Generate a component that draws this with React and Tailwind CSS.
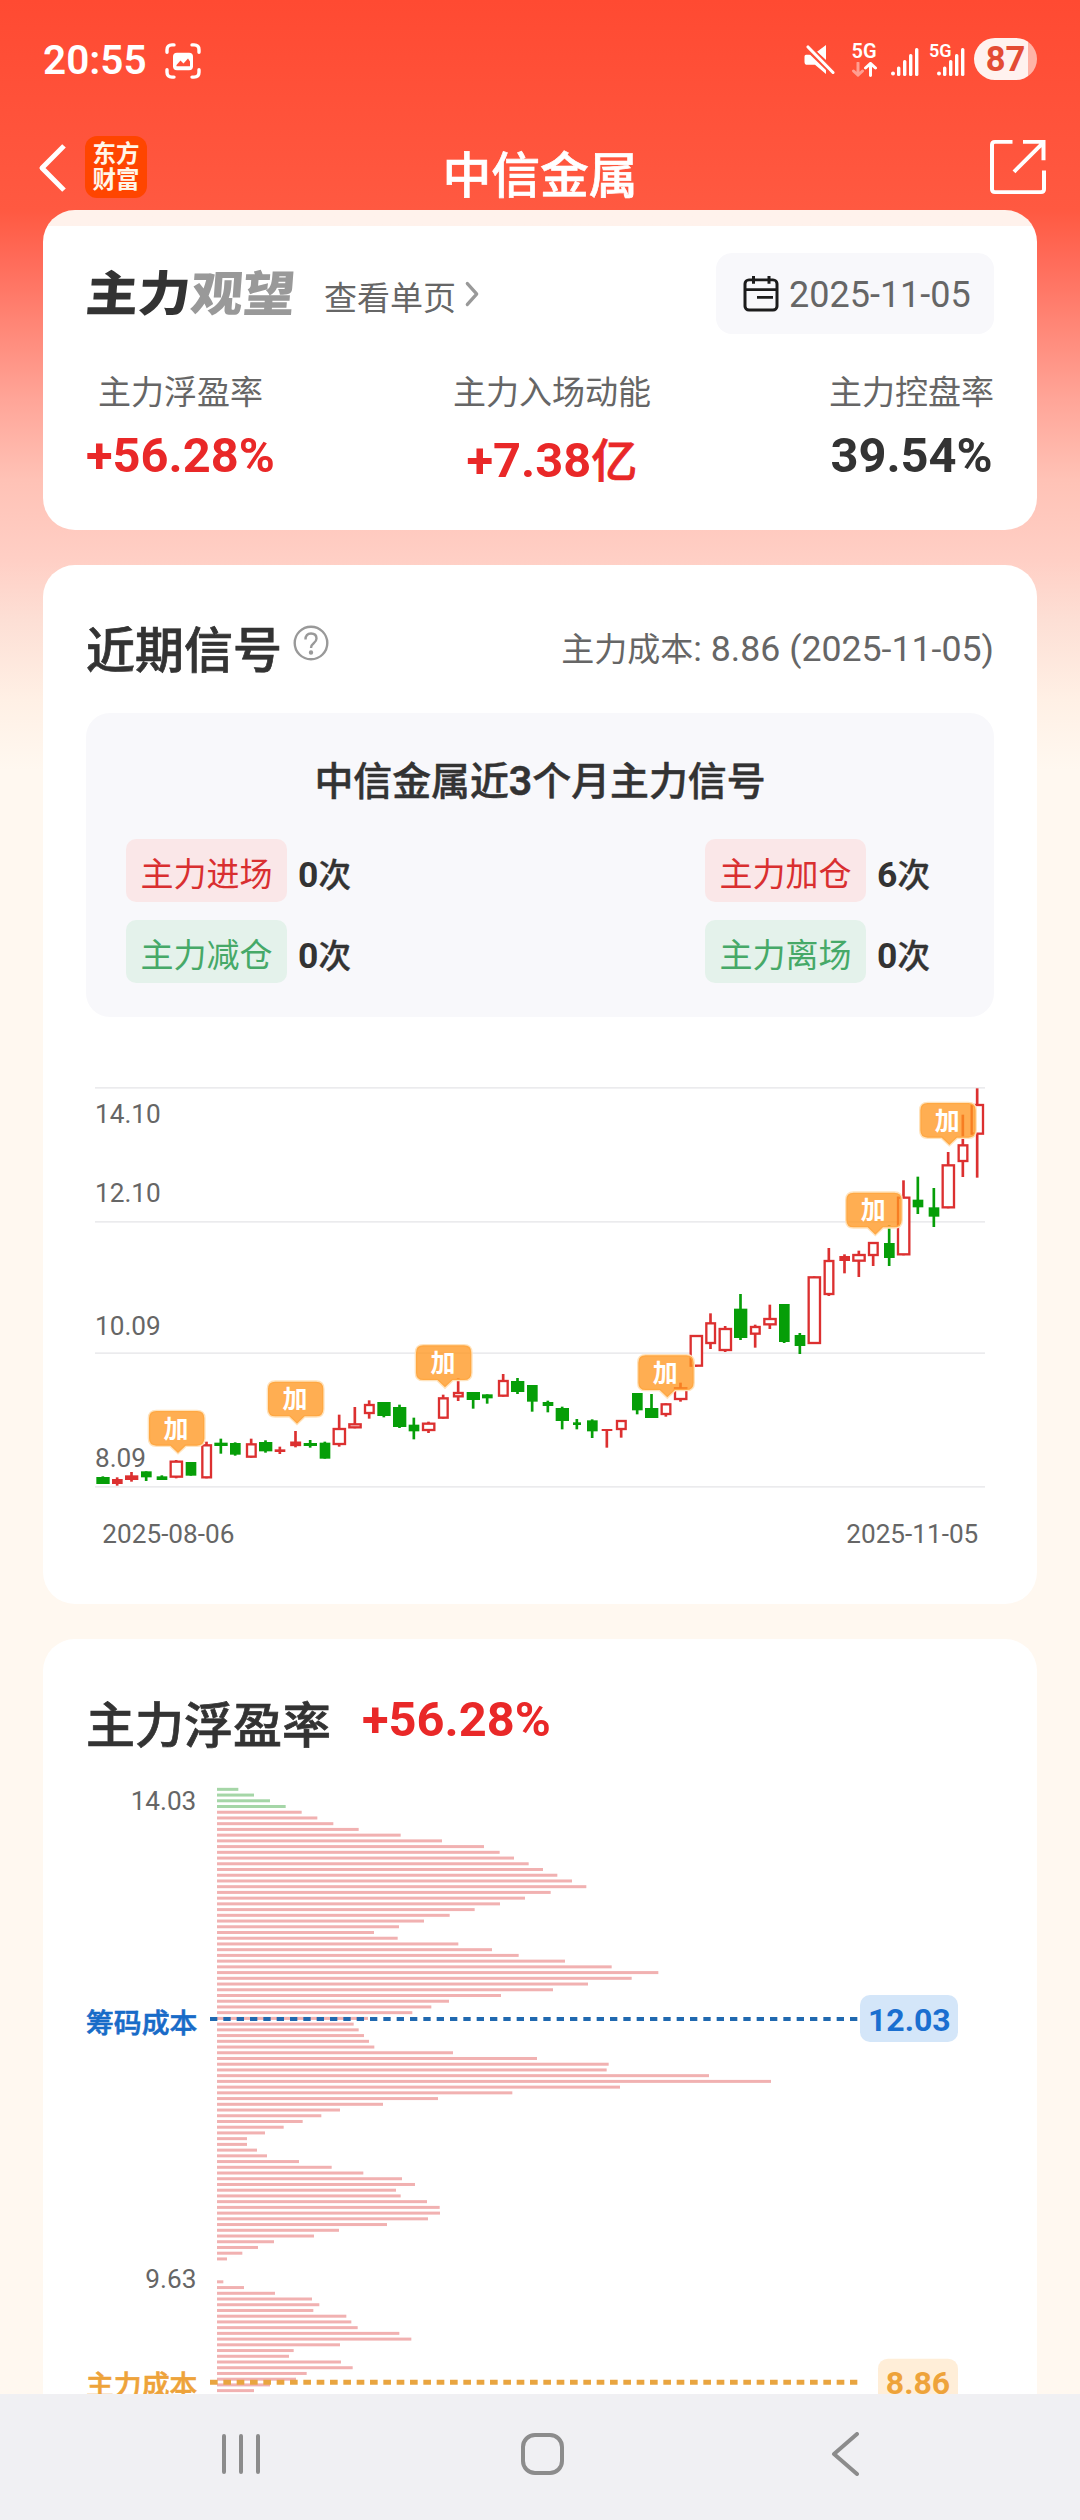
import { ChevronRight } from 'lucide-react';

const stats = [
	{ label: '主力浮盈率', value: '+56.28%', color: 'mt-[9px] text-[#e92828]' },
	{ label: '主力入场动能', value: '+7.38', unit: '亿', color: 'mt-[14px] text-[#e92828]' },
	{ label: '主力控盘率', value: '39.54%', color: 'mt-[9px] text-[#333333]' },
];

const signals = [
	{ name: '主力进场', count: 0, tone: 'bg-[#fae7e8] text-[#d92f30]' },
	{ name: '主力加仓', count: 6, tone: 'bg-[#fae7e8] text-[#d92f30]' },
	{ name: '主力减仓', count: 0, tone: 'bg-[#e4f2eb] text-[#46a968]' },
	{ name: '主力离场', count: 0, tone: 'bg-[#e4f2eb] text-[#46a968]' },
];

// Chart units are thirds of a pixel: [center, width, bodyTop, bodyBottom, high, low, kind]
// kind: g = down, r = up (hollow), f = up (filled)
const candles = [
	[69, 40, 1221, 1242, 1219, 1242, 'g'],
	[112, 32, 1227, 1242, 1222, 1247, 'f'],
	[155, 40, 1216, 1230, 1206, 1235, 'f'],
	[199, 32, 1204, 1222, 1204, 1233, 'g'],
	[246, 32, 1219, 1230, 1216, 1230, 'g'],
	[289, 40, 1172, 1223, 1170, 1225, 'r'],
	[333, 32, 1176, 1217, 1176, 1217, 'g'],
	[380, 32, 1123, 1225, 1115, 1225, 'r'],
	[423, 40, 1118, 1128, 1106, 1151, 'g'],
	[466, 32, 1119, 1154, 1117, 1157, 'g'],
	[514, 32, 1120, 1163, 1106, 1163, 'r'],
	[557, 40, 1116, 1144, 1111, 1148, 'g'],
	[600, 32, 1138, 1146, 1130, 1152, 'f'],
	[647, 32, 1115, 1128, 1083, 1132, 'r'],
	[691, 40, 1119, 1128, 1110, 1133, 'g'],
	[735, 32, 1118, 1166, 1115, 1166, 'g'],
	[778, 40, 1074, 1125, 1034, 1130, 'r'],
	[825, 40, 1060, 1075, 1011, 1075, 'r'],
	[868, 32, 1002, 1032, 991, 1046, 'r'],
	[912, 40, 996, 1038, 996, 1042, 'g'],
	[959, 40, 1011, 1071, 1004, 1074, 'g'],
	[1002, 32, 1064, 1084, 1043, 1108, 'g'],
	[1046, 40, 1058, 1083, 1055, 1089, 'r'],
	[1090, 32, 982, 1046, 974, 1046, 'r'],
	[1135, 32, 966, 982, 925, 993, 'r'],
	[1180, 40, 966, 990, 966, 1016, 'g'],
	[1222, 32, 973, 985, 973, 1001, 'g'],
	[1270, 32, 930, 980, 912, 980, 'r'],
	[1313, 40, 933, 966, 924, 972, 'g'],
	[1357, 32, 945, 995, 945, 1025, 'g'],
	[1404, 32, 996, 1008, 992, 1027, 'g'],
	[1447, 40, 1014, 1053, 1010, 1078, 'g'],
	[1491, 24, 1057, 1065, 1047, 1078, 'g'],
	[1537, 32, 1051, 1084, 1048, 1104, 'g'],
	[1581, 32, 1077, 1083, 1077, 1133, 'f'],
	[1624, 32, 1050, 1080, 1050, 1103, 'r'],
	[1672, 32, 969, 1021, 969, 1033, 'g'],
	[1715, 40, 1014, 1044, 972, 1044, 'g'],
	[1758, 32, 1000, 1035, 1000, 1040, 'r'],
	[1802, 40, 952, 990, 938, 995, 'r'],
	[1849, 40, 795, 890, 795, 890, 'r'],
	[1892, 32, 757, 822, 730, 837, 'r'],
	[1936, 40, 774, 843, 768, 846, 'r'],
	[1982, 40, 716, 804, 672, 810, 'g'],
	[2026, 32, 768, 794, 764, 833, 'r'],
	[2070, 40, 744, 766, 704, 777, 'r'],
	[2113, 32, 702, 816, 702, 819, 'g'],
	[2160, 32, 795, 828, 789, 852, 'g'],
	[2203, 40, 619, 822, 619, 822, 'r'],
	[2247, 32, 570, 675, 534, 678, 'r'],
	[2294, 32, 558, 573, 553, 610, 'f'],
	[2337, 40, 552, 575, 542, 621, 'r'],
	[2380, 32, 516, 558, 516, 588, 'r'],
	[2428, 32, 519, 564, 466, 588, 'g'],
	[2471, 40, 380, 556, 331, 556, 'r'],
	[2514, 32, 389, 412, 320, 432, 'g'],
	[2562, 32, 412, 440, 354, 471, 'g'],
	[2605, 40, 283, 415, 246, 415, 'r'],
	[2649, 32, 223, 276, 134, 321, 'r'],
	[2692, 40, 102, 194, 55, 323, 'r'],
];

const markers = [
	[207, 1023],
	[564, 935],
	[1008, 826],
	[1675, 856],
	[2299, 368],
	[2521, 99],
];

// Chip distribution, top price first, same third-of-a-pixel units
const chips = [
	64, 111, 159, 206, 254, 301, 349, 425, 551, 675, 801, 848, 891, 935, 978, 1021, 1065, 1108, 1001, 924, 849,
	773, 698, 621, 546, 471, 542, 724, 825, 905, 1044, 1184, 1324, 1244, 1113, 1008, 852, 696, 643, 586, 453, 410,
	425, 441, 456, 472, 708, 960, 1175, 1169, 1476, 1662, 1209, 886, 663, 498, 369, 313, 257, 200, 144, 90, 90,
	120, 150, 246, 344, 439, 555, 594, 537, 551, 630, 668, 669, 633, 510, 366, 291, 171, 123, 76, 30, 0, 0, 0, 19,
	81, 174, 285, 307, 289, 388, 403, 422, 547, 583, 369, 230, 216, 372, 407, 269, 237, 159, 111,
];

function SignalBars() {
	return (
		<svg className="w-7 h-[28px]" viewBox="0 0 28 28" fill="#fff">
			<circle cx="2" cy="25.500" r="2" />
			<rect x="6" y="18.500" width="3.400" height="9.500" rx="1.500" />
			<rect x="12" y="12" width="3.400" height="16" rx="1.500" />
			<rect x="18" y="6" width="3.400" height="22" rx="1.500" />
			<rect x="24" y="0" width="3.400" height="28" rx="1.500" />
		</svg>
	);
}

function StatusBar() {
	return (
		<div className="flex h-[118px] items-center pl-[43px] pr-[43px] text-white">
			<span className="mt-[2px] w-[106px] text-[40.500px] leading-none font-semibold">20:55</span>
			<svg className="ml-4 mt-[3px] w-9 h-[36px]" viewBox="0 0 36 37" preserveAspectRatio="none" fill="none" stroke="#fff" strokeWidth="3.400" strokeLinecap="round">
				<path d="M2 9.500V7q0-5 5-5h2M27 2h2q5 0 5 5v2.500M34 27.500V30q0 5-5 5h-2M9 35H7q-5 0-5-5v-2.500" />
				<rect x="8" y="10" width="20" height="18" rx="4" fill="#fff" stroke="none" />
				<path d="M11.500 24v-1.500l4-4.500 3 3 4.500-5 2 3V24z" fill="#ff5039" stroke="none" />
			</svg>
			<svg className="ml-auto w-[31px] h-[31px]" viewBox="0 0 31 32" preserveAspectRatio="none" fill="#fff">
				<path d="M22 1v15.500L13 8zM2 11h5l15 14.500V31L11 21.500H3.500q-3 0-3-3V13Q.5 11 2 11z" />
				<path d="M4 4l24.500 24.500" stroke="#ff5039" strokeWidth="7" />
				<path d="M4 3l25 26.500" stroke="#fff" strokeWidth="3" strokeLinecap="round" />
			</svg>
			<div className="ml-4 mt-[2px] flex w-[26px] flex-col items-center gap-[2px]">
				<span className="text-[20px] leading-[17px] font-semibold">5G</span>
				<svg className="w-[25px] h-[15px]" viewBox="0 0 25 16" preserveAspectRatio="none" fill="none" stroke="#fff" strokeWidth="3" strokeLinecap="round">
					<path d="M6 1v13M1.500 9.500L6 14l4.500-4.500" opacity=".45" />
					<path d="M18.500 14.500V2M13.500 6.500l5-5 5 5" />
				</svg>
			</div>
			<div className="ml-[14px] mt-[5px]">
				<SignalBars />
			</div>
			<div className="relative ml-[18px] mt-[5px]">
				<SignalBars />
				<span className="absolute -left-[8px] -top-[6px] text-[18px] leading-[18px] font-semibold">5G</span>
			</div>
			<div className="ml-[9px] flex h-[42px] w-[63px] items-center justify-center rounded-full bg-linear-to-r from-[#fff2ef] from-86% to-[#ffb3a6] to-86% pt-px text-[34.500px] leading-none font-bold text-[#e34c34]">
				87
			</div>
		</div>
	);
}

function NavHeader() {
	return (
		<header className="grid h-[92px] grid-cols-3 px-[34px]">
			<div className="flex items-start pt-[18px]">
				<svg className="ml-[4px] mt-[8px] w-7 h-[48px]" viewBox="0 0 28 50" preserveAspectRatio="none" fill="none" stroke="#fff" strokeWidth="5" strokeLinejoin="round">
					<path d="M26 2L4 25l22 23" />
				</svg>
				<div className="ml-[19px] flex h-[62px] w-[62px] flex-col items-center justify-center rounded-xl bg-[#ff4500] text-[23.500px] leading-[26px] font-bold text-[#fff6e8]">
					<span>东方</span>
					<span>财富</span>
				</div>
			</div>
			<h1 className="text-center pt-[24px] text-[48.800px] leading-[70px] font-medium whitespace-nowrap text-white [-webkit-text-stroke:0.7px]">中信金属</h1>
			<svg className="ml-auto mt-[21px] w-[56px] h-[56px]" viewBox="0 0 56 58" preserveAspectRatio="none" fill="none" stroke="#fff" strokeWidth="4">
				<path d="M22.500 3H5Q2 3 2 6v46q0 3 3 3h46q3 0 3-3V32.500M33 3h20.500v19M53 4L24 34" />
			</svg>
		</header>
	);
}

function SummaryCard() {
	return (
		<section className="h-[320px] rounded-[32px] bg-linear-to-b from-[#fff2ec] from-[16px] to-white to-[16px] px-[43px] pt-[43px]">
			<div className="flex items-center">
				<div className="w-[209px] shrink-0 pt-[2px]">
					<div className="origin-left -skew-x-[4deg] scale-x-[1.09] text-[48px] leading-[73px] font-black whitespace-nowrap text-[#333333]">
						主力<span className="text-[#999999]">观望</span>
					</div>
				</div>
				<span className="ml-[29px] mt-[11px] text-[33px] text-[#666666]">查看单页</span>
				<ChevronRight className="-ml-[5px] mt-px size-[42px] scale-x-90 text-[#999999]" strokeWidth={2} />
				<div className="ml-auto flex h-[81px] w-[278px] items-center rounded-2xl bg-[#f8f8fb] pl-[27px]">
					<svg className="w-9 h-[36px]" viewBox="0 0 36 37" preserveAspectRatio="none" fill="none" stroke="#1c1c1c" strokeWidth="3">
						<rect x="2" y="4" width="32" height="31" rx="4" />
						<path d="M2 14h32M10.500 0v8M26 0v8M14 22h16" />
					</svg>
					<span className="ml-[10px] mt-[2px] text-[36px] text-[#666666]">2025-11-05</span>
				</div>
			</div>
			<div className="mt-[35px] flex justify-between">
				{stats.map((stat) => (
					<div key={stat.label} className="flex flex-col items-center">
						<span className="text-[33px] leading-[48px] text-[#666666]">{stat.label}</span>
						<span className={`text-[48.800px] leading-[60px] font-bold ${stat.color}`}>
							{stat.value}
							{stat.unit && <span className="text-[46px] leading-none font-medium [-webkit-text-stroke:0.7px]">{stat.unit}</span>}
						</span>
					</div>
				))}
			</div>
		</section>
	);
}

function SignalPanel() {
	return (
		<div className="mt-[36px] h-[304px] rounded-3xl bg-[#f8f8fb] pl-[40px] pr-[62px]">
			<h3 className="ml-[22px] pt-[37px] text-center text-[38.900px] leading-[62px] font-medium text-[#333333] [-webkit-text-stroke:0.5px]">
				中信金属近<span className="text-[41px] font-semibold">3</span>个月主力信号
			</h3>
			<div className="mt-[26px] grid grid-cols-[226px_227px] justify-between gap-y-[18px]">
				{signals.map((signal) => (
					<div key={signal.name} className="flex h-[63px] items-center">
						<span className={`h-[63px] w-[161px] rounded-[10px] pt-[8px] text-center text-[33px] leading-[56px] ${signal.tone}`}>
							{signal.name}
						</span>
						<span className="ml-[11px] mt-[10px] text-[35.500px] leading-[56px] font-bold text-[#333333]">
							{signal.count}
							<span className="text-[32.500px] font-medium [-webkit-text-stroke:0.4px]">次</span>
						</span>
					</div>
				))}
			</div>
		</div>
	);
}

function Candle({ data }) {
	const [x, w, top, bottom, high, low, kind] = data;
	const color = kind === 'g' ? '#069e08' : '#dc3030';
	return (
		<g>
			<rect x={x - 4.5} y={high} width="8" height={low - high} fill={color} />
			{kind === 'r' ? (
				<rect x={x - w / 2 + 3} y={top + 3} width={w - 6} height={bottom - top - 6} fill="#fff" stroke={color} strokeWidth="7" />
			) : (
				<rect x={x - w / 2} y={top} width={w} height={bottom - top} fill={color} />
			)}
		</g>
	);
}

function CandleChart() {
	return (
		<svg className="mt-[53px] h-[490px] w-[908px]" viewBox="18 0 2724 1470">
			{[53, 455, 849, 1250].map((y) => (
				<rect key={y} x="45" y={y - 2} width="2670" height="5" fill="#ebebed" />
			))}
			{candles.map((candle) => (
				<Candle key={candle[0]} data={candle} />
			))}
			<g fill="#666666" fontSize="78.500">
				<text x="45" y="160">14.10</text>
				<text x="45" y="396">12.10</text>
				<text x="45" y="795">10.09</text>
				<text x="45" y="1191">8.09</text>
				<text x="67" y="1419">2025-08-06</text>
				<text x="2695" y="1419" textAnchor="end">2025-11-05</text>
			</g>
			{markers.map(([x, y]) => (
				<g key={x} transform={`translate(${x} ${y})`}>
					<path
						d="M22 0H144Q166 0 166 22V82Q166 104 144 104H110L87 126 64 104H22Q0 104 0 82V22Q0 0 22 0z"
						fill="#ff961e"
						fillOpacity=".77"
						stroke="#ffe3bd"
						strokeWidth="8"
						paintOrder="stroke"
					/>
					<text x="81" y="80" textAnchor="middle" fontSize="75" fontWeight="700" fill="#fff">加</text>
				</g>
			))}
		</svg>
	);
}

function SignalCard() {
	return (
		<section className="mt-[35px] h-[1039px] rounded-[32px] bg-white px-[43px] pt-[48px]">
			<div className="flex h-[64px] items-center">
				<h2 className="mt-[14px] text-[49px] leading-[72px] font-medium text-[#333333] [-webkit-text-stroke:0.7px]">近期信号</h2>
				<svg className="-mt-[5px] ml-[11px] size-9" viewBox="0 0 36 36" fill="none" stroke="#999999" strokeWidth="2.400">
					<circle cx="18" cy="18" r="16.300" />
					<path d="M12.500 14.500q0-6 5.500-6t5.500 5q0 2.500-2.800 4.700T18 23" />
					<circle cx="18" cy="27.500" r="1" fill="#999999" />
				</svg>
				<p className="ml-auto mt-[10px] text-[35.700px] text-[#666666]">
					<span className="text-[33px]">主力成本</span>: 8.86 (2025-11-05)
				</p>
			</div>
			<SignalPanel />
			<CandleChart />
		</section>
	);
}

function ChipChart() {
	return (
		<svg className="mt-[21px] h-[640px] w-[908px]" viewBox="18 300 2724 1920">
			{chips.map((length, i) => (
				<rect key={i} x="411" y={323.5 + i * 17.18} width={length} height="9" fill={i < 4 ? '#a5d6a7' : '#f1b1b1'} />
			))}
			<g fill="#666666" fontSize="78.500" textAnchor="end">
				<text x="349" y="390">14.03</text>
				<text x="349" y="1823">9.63</text>
			</g>
			<g fontSize="83.500" fontWeight="500" strokeWidth="1.800">
				<text x="18" y="1058" fill="#186bc8" stroke="#186bc8">筹码成本</text>
				<text x="18" y="2145" fill="#eea33a" stroke="#eea33a">主力成本</text>
			</g>
			<path d="M390 1017H2332" stroke="#2069b0" strokeWidth="12" strokeDasharray="22 18" />
			<path d="M390 2107H2332" stroke="#e9a540" strokeWidth="15" strokeDasharray="23 17" />
			<rect x="2340" y="945" width="294" height="141" rx="30" fill="#d4e6f9" />
			<rect x="2394" y="2036" width="240" height="141" rx="30" fill="#ffeed8" />
			<g fontSize="96" fontWeight="700" textAnchor="middle">
				<text x="2488" y="1053" fill="#1a6fd0">12.03</text>
				<text x="2514" y="2142" fill="#eea33a">8.86</text>
			</g>
		</svg>
	);
}

function ProfitCard() {
	return (
		<section className="mt-[35px] rounded-t-[32px] bg-white px-[43px] pt-[48px]">
			<div className="flex h-[72px] items-center">
				<h2 className="mt-[7px] text-[49px] leading-[72px] font-medium text-[#333333] [-webkit-text-stroke:0.7px]">主力浮盈率</h2>
				<span className="-mt-[6px] ml-[31px] text-[48.800px] leading-[60px] font-bold text-[#e92828]">+56.28%</span>
			</div>
			<ChipChart />
		</section>
	);
}

function SystemNav() {
	return (
		<nav className="flex h-[126px] shrink-0 items-center bg-[#f0f0f3] pb-[6px] pl-[221px] pr-[221px]">
			<svg className="w-10 h-[42px]" viewBox="0 0 40 42" stroke="#8c8c8c" strokeWidth="4" strokeLinecap="round">
				<path d="M3 3v36M20 3v36M37 3v36" />
			</svg>
			<div className="ml-[260px] h-[42px] w-[43px] rounded-[14px] border-4 border-[#8c8c8c]" />
			<svg className="ml-auto w-7 h-[44px]" viewBox="0 0 28 44" fill="none" stroke="#8c8c8c" strokeWidth="4" strokeLinecap="round" strokeLinejoin="round">
				<path d="M26 2L3 22l23 20" />
			</svg>
		</nav>
	);
}

export default function App() {
	return (
		<div className="flex h-[2520px] w-[1080px] flex-col overflow-hidden bg-[#fff8f0] font-[Roboto,'Noto_Sans_CJK_SC',sans-serif]">
			<main className="min-h-0 flex-1 overflow-hidden bg-[linear-gradient(to_bottom,#ff4a32_0px,#ff5941_210px,#ff6b59_260px,#ff8474_320px,#ffa598_400px,#ffc2b6_480px,#ffcfc5_560px,#fddfd5_620px,#fff0e5_700px,#fff8f0_770px)]">
				<StatusBar />
				<NavHeader />
				<div className="mx-[43px]">
					<SummaryCard />
					<SignalCard />
					<ProfitCard />
				</div>
			</main>
			<SystemNav />
		</div>
	);
}
